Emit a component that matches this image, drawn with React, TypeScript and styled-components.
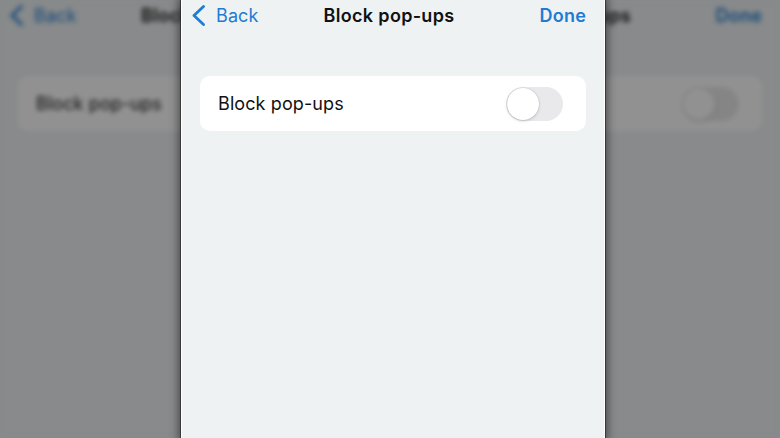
import React from "react";
import styled, { createGlobalStyle } from "styled-components";

const GlobalStyle = createGlobalStyle`
  html, body { margin: 0; padding: 0; background: #878a8b; overflow: hidden; }
  * { box-sizing: border-box; }
`;

const Stage = styled.div`
  position: relative;
  width: 780px;
  height: 438px;
  overflow: hidden;
  background: #878a8b;
  font-family: Inter, "Noto Sans", "Liberation Sans", sans-serif;
`;

const Backdrop = styled.div`
  width: 780px;
  height: 438px;
  filter: blur(2.4px) brightness(0.57);
`;

const Panel = styled.div`
  position: absolute;
  left: 181px;
  top: 0;
  width: 424px;
  height: 438px;
  box-shadow: 0 0 0 1px rgba(40, 40, 40, 0.7), 0 0 8px 3px rgba(0, 0, 0, 0.45);
  border-left: 1px solid #ffffff;
  border-right: 1px solid #ffffff;
`;

const Screen = styled.div`
  height: 100%;
  background: #eef2f3;
  display: flex;
  flex-direction: column;
`;

const NavBar = styled.div`
  height: 31px;
  display: grid;
  grid-template-columns: 1fr auto 1fr;
  align-items: center;
  padding: 0 18px 0 10px;
`;

const BackButton = styled.div`
  display: flex;
  align-items: center;
  gap: 11px;
  color: #1f7bd3;
  font-size: 18px;
  letter-spacing: 0.1px;
  justify-self: start;
`;

const Title = styled.div<{ $gap: number }>`
  display: flex;
  gap: ${(p) => p.$gap}px;
  font-size: 18px;
  font-weight: 600;
  color: #111;
  letter-spacing: 0.3px;
`;

const Done = styled.div`
  justify-self: end;
  color: #1f7bd3;
  font-size: 18px;
  font-weight: 600;
  letter-spacing: 0.2px;
`;

const Body = styled.div`
  padding: 45px 18px 0;
`;

const Card = styled.div`
  height: 55px;
  background: #ffffff;
  border-radius: 10px;
  display: flex;
  align-items: center;
  justify-content: space-between;
  padding: 0 23px 0 18px;
`;

const Label = styled.div`
  font-size: 18px;
  color: #111;
  letter-spacing: 0.1px;
`;

const Toggle = styled.div`
  position: relative;
  width: 57px;
  height: 34px;
  border-radius: 17px;
  background: #e9e9eb;
`;

const Knob = styled.div`
  position: absolute;
  left: 1px;
  top: 1px;
  width: 32px;
  height: 32px;
  border-radius: 50%;
  background: #ffffff;
  box-shadow: 0 1px 3px rgba(0, 0, 0, 0.18), 0 0 0 0.5px rgba(0, 0, 0, 0.08);
`;

const Chevron = () => (
  <svg width="13" height="21" viewBox="0 0 13 21" fill="none">
    <path d="M11.5 1.5 L2 10.5 L11.5 19.5" stroke="currentColor" strokeWidth="2.8" strokeLinecap="round" strokeLinejoin="round" />
  </svg>
);

function SettingsScreen({ titleGap }: { titleGap: number }) {
  return (
    <Screen>
      <NavBar>
        <BackButton>
          <Chevron />
          <span>Back</span>
        </BackButton>
        <Title $gap={titleGap}>
          <span>Block</span>
          <span>pop-ups</span>
        </Title>
        <Done>Done</Done>
      </NavBar>
      <Body>
        <Card>
          <Label>Block pop-ups</Label>
          <Toggle>
            <Knob />
          </Toggle>
        </Card>
      </Body>
    </Screen>
  );
}

export default function App() {
  return (
    <>
      <GlobalStyle />
      <Stage>
        <Backdrop>
          <SettingsScreen titleGap={364} />
        </Backdrop>
        <Panel>
          <SettingsScreen titleGap={5} />
        </Panel>
      </Stage>
    </>
  );
}
